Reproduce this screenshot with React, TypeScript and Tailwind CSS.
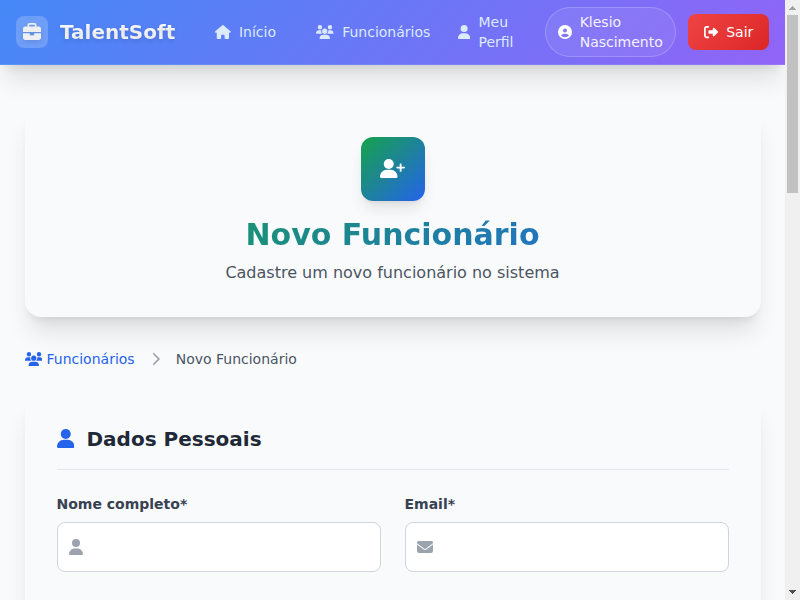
import type { ReactNode } from "react";
import {
  FaBriefcase,
  FaChevronRight,
  FaCircleUser,
  FaEnvelope,
  FaHouse,
  FaRightFromBracket,
  FaUser,
  FaUsers,
} from "react-icons/fa6";

const HEAD = "M224 256A128 128 0 1 0 224 0a128 128 0 1 0 0 256z";
const BODY =
  "M178.3 278C79.8 278 0 357.8 0 456.3c0 16.4 13.3 29.7 29.7 29.7h388.6c16.4 0 29.7-13.3 29.7-29.7C448 357.8 368.2 278 269.7 278h-91.4z";

function PersonIcon({ className }: { className: string }) {
  return (
    <svg className={className} viewBox="0 0 448 512" fill="currentColor">
      <path d={HEAD} />
      <path d={BODY} />
    </svg>
  );
}

function PersonPlusIcon({ className }: { className: string }) {
  return (
    <svg className={className} viewBox="0 0 640 512" fill="currentColor">
      <path d={HEAD} />
      <path d={BODY} />
      <path d="M504 304v-60h-64c-13.3 0-24-10.7-24-24s10.7-24 24-24h64v-60c0-13.3 10.7-24 24-24s24 10.7 24 24v60h64c13.3 0 24 10.7 24 24s-10.7 24-24 24h-64v60c0 13.3-10.7 24-24 24s-24-10.7-24-24z" />
    </svg>
  );
}

function NavBar() {
  return (
    <nav className="relative z-10 flex h-[65px] shrink-0 items-center border-b border-white/10 bg-[linear-gradient(135deg,rgba(59,130,246,0.95)_0%,rgba(139,92,246,0.95)_100%)] pl-4 text-sm text-[#dbeafe] shadow-xl">
      <a className="flex items-center gap-3">
        <span className="flex size-8 items-center justify-center rounded-lg bg-white/20">
          <FaBriefcase className="size-[18px] text-[#eeeff1] drop-shadow-[0_2px_2px_rgba(0,0,0,0.1)]" />
        </span>
        <span className="bg-white bg-clip-text text-xl font-bold text-transparent [text-shadow:0_2px_4px_rgba(0,0,0,0.12)]">
          TalentSoft
        </span>
      </a>
      <a className="ml-[40px] flex w-[61px] shrink-0 items-center gap-2">
        <FaHouse className="h-[14px] w-[15.75px] shrink-0" />
        Início
      </a>
      <a className="ml-[40px] flex w-[114px] shrink-0 items-center gap-2">
        <FaUsers className="h-[14px] w-[17.5px] shrink-0" />
        <span className="pl-[0.5px]">Funcionários</span>
      </a>
      <a className="ml-[28px] flex w-[56px] shrink-0 items-center gap-2">
        <FaUser className="h-[14px] w-[12.25px] shrink-0" />
        <span>Meu Perfil</span>
      </a>
      <div className="ml-[30.5px] flex h-[50px] w-[131px] shrink-0 items-center gap-2 rounded-full border border-white/20 bg-white/[0.07] pl-3 text-white/90">
        <FaCircleUser className="size-[14px] shrink-0 text-white" />
        <span>Klesio Nascimento</span>
      </div>
      <button className="ml-3 flex h-9 w-[81px] shrink-0 items-center gap-2 rounded-lg bg-[linear-gradient(135deg,#ef4444,#dc2626)] pl-4 text-white">
        <FaRightFromBracket className="size-[14px] shrink-0" />
        <span className="pl-[0.5px]">Sair</span>
      </button>
    </nav>
  );
}

function Field({ label, icon }: { label: string; icon: ReactNode }) {
  return (
    <label className="block">
      <span className="mb-2 block text-sm font-semibold text-[#374151]">{label}</span>
      <span className="flex h-[50px] items-center rounded-lg border border-[#d1d5db] bg-white pl-[11px] text-[#9ca3af]">
        {icon}
        <input className="w-full bg-transparent px-3 outline-none" />
      </span>
    </label>
  );
}

function ScrollBar() {
  return (
    <div className="flex w-[15px] shrink-0 flex-col items-center justify-between bg-[#f0f0f0]">
      <div className="flex flex-col items-center">
        <div className="h-[15px] pt-[6px]">
          <svg width="7" height="4" viewBox="0 0 7 4" fill="#a3a3a3" shapeRendering="crispEdges">
            <path d="M3 0h1v1h1v1h1v1h1v1H0V3h1V2h1V1h1z" />
          </svg>
        </div>
        <div className="h-[178px] w-[11px] bg-[#c1c1c1]" />
      </div>
      <div className="h-[10px]">
        <svg width="7" height="4" viewBox="0 0 7 4" fill="#505050" shapeRendering="crispEdges">
          <path d="M0 0h7v1H6v1H5v1H4v1H3V3H2V2H1V1H0z" />
        </svg>
      </div>
    </div>
  );
}

export default function App() {
  return (
    <div className="flex h-[600px] w-[800px] overflow-hidden bg-[#f9fafc] font-['DejaVu_Sans',sans-serif]">
      <div className="flex w-[785px] shrink-0 flex-col overflow-hidden">
        <NavBar />
        <main className="mx-auto w-[736px] pt-10">
          <header className="flex h-[212px] flex-col items-center rounded-2xl bg-[#f9fafc] p-8 shadow-xl">
            <div className="flex size-16 shrink-0 items-center justify-center rounded-xl bg-[linear-gradient(135deg,#16a34a,#2563eb)] shadow-lg">
              <PersonPlusIcon className="h-5 w-[25px] text-white" />
            </div>
            <h1 className="mt-4 w-full bg-[linear-gradient(135deg,#16a34a,#2563eb)] bg-clip-text text-center text-3xl font-bold text-transparent">
              Novo Funcionário
            </h1>
            <p className="mt-2 text-[#4b5563]">Cadastre um novo funcionário no sistema</p>
          </header>

          <div className="mt-8 flex h-5 items-center text-sm text-[#4b5563]">
            <a className="flex items-center gap-[4.5px] text-[#2563eb]">
              <FaUsers className="h-[14px] w-[17.5px]" />
              Funcionários
            </a>
            <FaChevronRight className="mr-[15.5px] ml-[16.5px] h-[14px] w-[9px] text-[#9ca3af]" />
            Novo Funcionário
          </div>

          <section className="mt-6 h-[400px] rounded-2xl bg-[#f9fafc] p-8 shadow-xl">
            <h2 className="flex items-center gap-[12.5px] border-b border-[#e5e7eb] pb-4 text-xl font-bold text-[#1f2937]">
              <PersonIcon className="h-5 w-[17.5px] text-[#2563eb]" />
              Dados Pessoais
            </h2>
            <div className="mt-6 grid grid-cols-2 gap-6">
              <Field label="Nome completo*" icon={<FaUser className="h-4 w-[14px] shrink-0" />} />
              <Field label="Email*" icon={<FaEnvelope className="size-4 shrink-0" />} />
            </div>
          </section>
        </main>
      </div>
      <ScrollBar />
    </div>
  );
}
